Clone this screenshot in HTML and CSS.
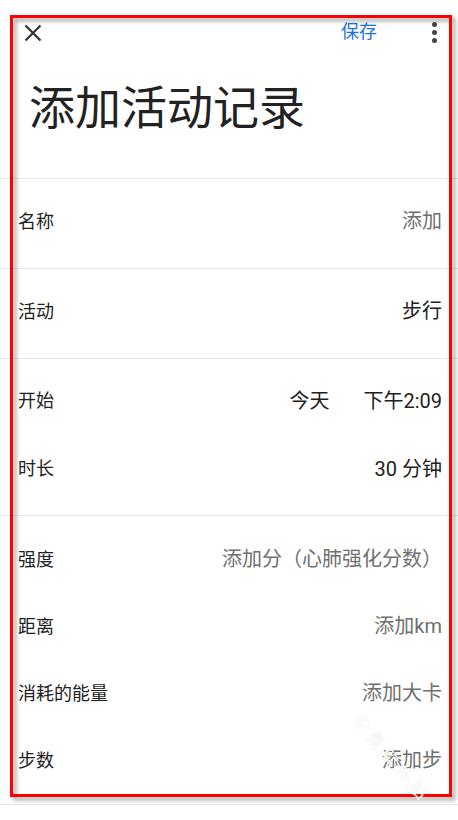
FILE: index.html
```html
<!DOCTYPE html>
<html>
	<head>
		<title>添加活动记录</title>
		<meta charset="UTF-8"><meta name="viewport" content="width=device-width, initial-scale=1" />
		<link rel="stylesheet" href="styles.css">
	</head>
	<body>
		<div class="screen">
			<div class="head">
				<div class="toolbar">
					<span class="close">
						<svg width="18" height="18" viewBox="0 0 18 18"><path d="M1.5 1.5L16.5 16.5M16.5 1.5L1.5 16.5" stroke="#333" stroke-width="2.2" fill="none"/></svg>
					</span>
					<span class="save">保存</span>
					<span class="more"><i></i><i></i><i></i></span>
				</div>
				<h1 class="title">添加活动记录</h1>
			</div>

			<div class="group">
				<div class="row tall"><span class="label">名称</span><span class="value hint">添加</span></div>
			</div>
			<div class="group">
				<div class="row tall"><span class="label">活动</span><span class="value">步行</span></div>
			</div>
			<div class="group">
				<div class="row"><span class="label">开始</span><span class="value pair"><span>今天</span><span>下午2:09</span></span></div>
				<div class="row"><span class="label">时长</span><span class="value">30 分钟</span></div>
			</div>
			<div class="group four">
				<div class="row"><span class="label">强度</span><span class="value hint">添加分（心肺强化分数）</span></div>
				<div class="row"><span class="label">距离</span><span class="value hint">添加km</span></div>
				<div class="row"><span class="label">消耗的能量</span><span class="value hint">添加大卡</span></div>
				<div class="row"><span class="label">步数</span><span class="value hint">添加步</span></div>
			</div>
		</div>

		<!-- annotation frame drawn over the screenshot -->
		<div class="mark"></div>
		<div class="watermark">千景软件站</div>
	</body>
</html>
```

FILE: styles.css
```css
body{
	margin: 0;
	background-color: #fff;
	font-family: Roboto, "Noto Sans CJK SC", sans-serif;
	color: #212121;
}
.screen{
	width: 458px;
}
.head{
	height: 178px;
	border-bottom: 1px solid #e6e6e6;
}
.toolbar{
	height: 64px;
	display: flex;
	align-items: center;
	padding: 0 21px 0 24px;
}
.close{
	display: flex;
	margin-top: 1px;
}
.save{
	margin-left: auto;
	margin-right: 55px;
	font-size: 18px;
	line-height: 1;
	color: #1a73e8;
	margin-top: -1px;
}
.more{
	display: flex;
	flex-direction: column;
	gap: 3px;
}
.more i{
	display: block;
	width: 5px;
	height: 5px;
	border-radius: 50%;
	background-color: #444;
}
.title{
	margin: 21px 0 0 0;
	padding-left: 29px;
	font-size: 46px;
	font-weight: normal;
	line-height: 1;
	color: #222;
}
.group{
	padding: 6px 16px 14px 18px;
	border-bottom: 1px solid #e6e6e6;
}
.group.four{
	padding-top: 8px;
	padding-bottom: 12px;
}
.row{
	height: 68px;
	display: flex;
	align-items: center;
	justify-content: space-between;
}
.row.tall{
	height: 69px;
}
.group.four .row{
	height: 67px;
}
.label{
	font-size: 18px;
	color: #212121;
}
.value{
	font-size: 20px;
	color: #212121;
}
.value.hint{
	color: #6f6f6f;
}
.pair{
	display: flex;
	gap: 34px;
}
.mark{
	position: absolute;
	left: 10px;
	top: 15px;
	width: 442px;
	height: 782px;
	box-sizing: border-box;
	border: 3px solid #ff0000;
	filter: drop-shadow(3px 3px 2px rgba(0,0,0,0.4));
}
.watermark{
	position: absolute;
	left: 366px;
	top: 708px;
	font-size: 17px;
	letter-spacing: 5px;
	color: #fff;
	text-shadow: 0 0 1px rgba(0,0,0,0.15);
	transform: rotate(49deg);
	transform-origin: left top;
	white-space: nowrap;
}
```
